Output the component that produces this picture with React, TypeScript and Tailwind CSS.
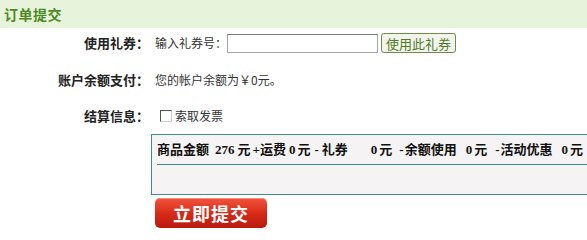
const cn = '"Noto Sans CJK SC", sans-serif';
const serif = '"Liberation Serif", "Noto Sans CJK SC", serif';

const Row = ({ label, children, className = "" }: { label: string; children: React.ReactNode; className?: string }) => (
  <div className={`flex items-center ${className}`}>
    <div className="w-[149px] text-right text-[13px] font-bold text-[#222]">{label}</div>
    <div className="ml-[6px] flex items-center text-[12px] text-[#333]">{children}</div>
  </div>
);

// [text, left margin]
const summary: [string, string][] = [
  ["商品金额", "ml-0"],
  ["276", "ml-[6px]"],
  ["元", "ml-[3px]"],
  ["+", "ml-[2px]"],
  ["运费", "ml-0"],
  ["0", "ml-[3px]"],
  ["元", "ml-[2px]"],
  ["-", "ml-[4px]"],
  ["礼券", "ml-[3px]"],
  ["0", "ml-[23px]"],
  ["元", "ml-[2px]"],
  ["-", "ml-[7px]"],
  ["余额使用", "ml-[1px]"],
  ["0", "ml-[9px]"],
  ["元", "ml-[2px]"],
  ["-", "ml-[8px]"],
  ["活动优惠", "ml-[1px]"],
  ["0", "ml-[9px]"],
  ["元", "ml-[2px]"],
];

export default function App() {
  return (
    <div className="w-[587px] h-[228px] overflow-hidden bg-white" style={{ fontFamily: cn }}>
      <div className="h-[28px] bg-[#e8f3dc] pl-[4px] flex items-center text-[14px] font-bold text-[#4b8a22] tracking-[0.5px]">
        订单提交
      </div>
      <Row label="使用礼券：" className="mt-[5px] h-[20px]">
        <span>输入礼券号：</span>
        <input className="w-[151px] h-[19px] border border-[#a5a5a5] border-t-[#7a7a7a] bg-white outline-none" />
        <button className="ml-[3px] h-[20px] px-[4px] rounded-[3px] border border-[#6d8c4c] bg-[#f3f5ec] text-[13px] leading-none text-[#4f7a2a]">
          使用此礼券
        </button>
      </Row>
      <Row label="账户余额支付：" className="mt-[17px] h-[20px]">
        <span>您的帐户余额为￥0元。</span>
      </Row>
      <Row label="结算信息：" className="mt-[16px] h-[20px]">
        <span className="ml-[5px] w-[12px] h-[12px] border border-[#555] border-r-[#ccc] border-b-[#ccc] bg-white" />
        <span className="ml-[3px]">索取发票</span>
      </Row>
      <div className="ml-[151px] mt-[8px] w-[480px] h-[61px] border border-[#3f8c88] bg-[#f5f3f3]">
        <div className="h-[29px] flex items-center pl-[5px] text-[13px] font-bold text-[#111] whitespace-nowrap" style={{ fontFamily: serif }}>
          {summary.map(([t, m], i) => (
            <span key={i} className={m}>{t}</span>
          ))}
        </div>
        <div className="ml-[5px] border-t border-[#3f8c88]" />
      </div>
      <button className="ml-[155px] mt-[3px] w-[112px] h-[30px] rounded-[5px] bg-gradient-to-b from-[#f0533c] via-[#d92a18] to-[#b81a0e] text-white text-[18px] font-bold tracking-[1px] shadow-[inset_0_1px_0_#f98a78]">
        立即提交
      </button>
    </div>
  );
}
